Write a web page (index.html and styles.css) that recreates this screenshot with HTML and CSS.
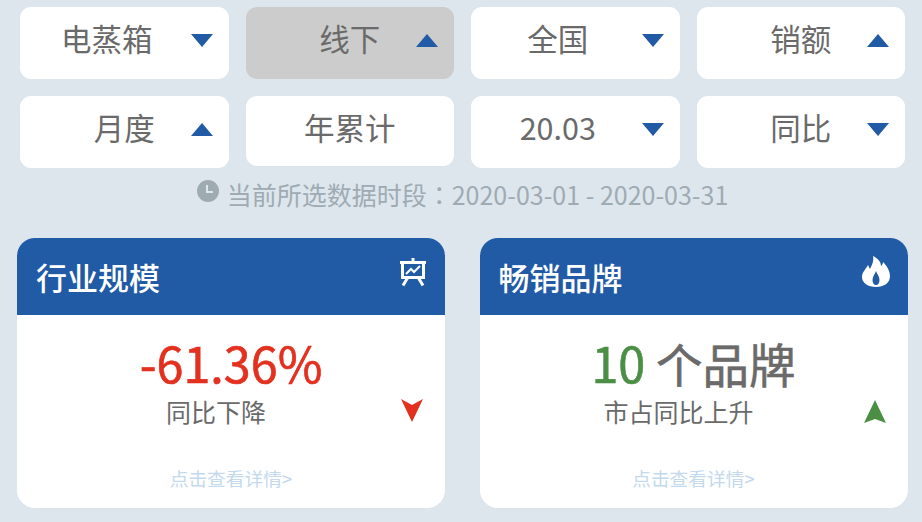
FILE: index.html
```html
<!DOCTYPE html>
<html lang="zh-CN">
<head>
    <meta charset="UTF-8">
    <title>行业概览</title>
    <link rel="stylesheet" href="styles.css">
</head>
<body>
    <div class="filters">
        <div class="pill pill-short"><span class="label">电蒸箱</span><i class="caret caret-down"></i></div>
        <div class="pill pill-active"><span class="label">线下</span><i class="caret caret-up"></i></div>
        <div class="pill pill-short"><span class="label">全国</span><i class="caret caret-down"></i></div>
        <div class="pill"><span class="label">销额</span><i class="caret caret-up"></i></div>
        <div class="pill"><span class="label">月度</span><i class="caret caret-up"></i></div>
        <div class="pill pill-plain"><span class="label">年累计</span></div>
        <div class="pill pill-short"><span class="label">20.03</span><i class="caret caret-down"></i></div>
        <div class="pill"><span class="label">同比</span><i class="caret caret-down"></i></div>
    </div>

    <p class="period">
        <svg class="clock" viewBox="0 0 22 22">
            <circle cx="11" cy="11" r="11" fill="#9fabb3"/>
            <path d="M10 5v7h6" fill="none" stroke="#dde6ed" stroke-width="2"/>
        </svg>
        <span>当前所选数据时段<span class="colon" lang="zh-TW">：</span>2020-03-01 - 2020-03-31</span>
    </p>

    <div class="cards">
        <section class="card">
            <header class="card-head">
                <h2>行业规模</h2>
                <svg class="head-icon" viewBox="0 0 28 29">
                    <path d="M14 0v4M1 4.500h26M3.500 4.500v15h21v-15M8.500 20l-4.500 7.500M19.500 20l4.500 7.500" fill="none" stroke="#fff" stroke-width="3"/>
                    <path d="M7 16l5-5 3 3 6-6" fill="none" stroke="#fff" stroke-width="2"/>
                </svg>
            </header>
            <div class="card-body">
                <div class="value value-down">-61.36%</div>
                <div class="sub">同比下降</div>
                <svg class="trend" viewBox="0 0 22 23"><path d="M0 0l11 6 11-6-11 23z" fill="#e3301f"/></svg>
                <div class="more">点击查看详情&gt;</div>
            </div>
        </section>
        <section class="card">
            <header class="card-head">
                <h2>畅销品牌</h2>
                <svg class="head-icon flame" viewBox="0 0 28 32">
                    <path fill-rule="evenodd" fill="#fff" d="M11 0c4 2 8 5 8 10 1-1 2-2 2-4 4 4 7 9 7 14 0 7-6 11-14 11S0 27 0 21c0-5 4-8 6-12 1 2 1.500 3 2 4 2-4 4-8 3-13zM14 15c-1 3-3.500 5.500-3.500 9 0 3 1.500 5 3.500 5s3.500-2 3.500-5c0-3.500-2.500-6-3.500-9z"/>
                </svg>
            </header>
            <div class="card-body">
                <div class="value"><span class="value-up">10</span> <span class="value-unit">个品牌</span></div>
                <div class="sub">市占同比上升</div>
                <svg class="trend trend-up" viewBox="0 0 22 23"><path d="M11 0l11 23-11-4-11 4z" fill="#4b8f45"/></svg>
                <div class="more">点击查看详情&gt;</div>
            </div>
        </section>
    </div>
</body>
</html>
```

FILE: styles.css
```css
:root {
    --bg-color: #dde6ed;
    --blue: #215aa5;
    --text-color: #6a6a6a;
}

* {
    box-sizing: border-box;
    margin: 0;
    padding: 0;
}

body {
    width: 922px;
    height: 522px;
    overflow: hidden;
    background-color: var(--bg-color);
    color: var(--text-color);
    font-family: "Noto Sans CJK SC", "Noto Sans", sans-serif;
    padding: 7px 17px 0 20px;
}

.filters {
    display: grid;
    grid-template-columns: repeat(4, 208.500px);
    grid-auto-rows: 72px;
    gap: 17px;
}

.pill {
    position: relative;
    display: flex;
    align-items: center;
    background: #fff;
    border-radius: 11px;
    padding-bottom: 10px;
}

.pill-active { background: #cccccc; }

.pill-plain {
    height: 70px;
    padding-bottom: 8px;
}

.label {
    flex: 1;
    text-align: center;
    font-size: 30.500px;
    line-height: 40px;
}

.pill-short .label { padding-right: 35px; }

.caret {
    position: absolute;
    top: 27px;
    right: 16px;
    width: 0;
    height: 0;
    border-left: 11px solid transparent;
    border-right: 11px solid transparent;
}

.caret-down { border-top: 13px solid var(--blue); }
.caret-up { border-bottom: 13px solid var(--blue); }

.period {
    display: flex;
    justify-content: center;
    align-items: center;
    gap: 8px;
    margin-top: 7px;
    height: 38px;
    color: #9fabb3;
    font-size: 25px;
    line-height: 38px;
}

/* TC cut of the font centres the full-width colon */
.colon { font-family: "Noto Sans CJK TC", sans-serif; }

.clock {
    width: 22px;
    height: 22px;
    margin-bottom: 6px;
}

.cards {
    display: flex;
    gap: 34.500px;
    margin-top: 25px;
    margin-left: -3px;
}

.card {
    flex: none;
    width: 428px;
    height: 270px;
    background: #fff;
    border-radius: 18px;
    overflow: hidden;
}

.card-head {
    display: flex;
    justify-content: space-between;
    align-items: flex-start;
    height: 77px;
    background: var(--blue);
    padding: 19px 18px 0 19px;
    color: #fff;
}

.card-head h2 {
    font-size: 31px;
    font-weight: 500;
    line-height: 40px;
}

.head-icon {
    width: 28px;
    height: 29px;
    margin-top: 1px;
}

.flame {
    height: 32px;
    margin-top: -1px;
}

.card-body {
    position: relative;
    height: 193px;
    padding-top: 17px;
    text-align: center;
}

.value {
    font-size: 48.500px;
    line-height: 61px;
    -webkit-text-stroke: 0.6px;
}

.value-down { color: #e3301f; }
.value-up { color: #4b8f45; }
.value-unit { font-size: 46.500px; }

.sub {
    font-size: 25px;
    line-height: 36px;
    padding-right: 30px;
}

.trend {
    position: absolute;
    top: 84px;
    right: 22px;
    width: 22px;
    height: 23px;
}

.trend-up { top: 85px; }

.more {
    margin-top: 36px;
    font-size: 18.700px;
    line-height: 26px;
    color: #c3d9ee;
}
```
